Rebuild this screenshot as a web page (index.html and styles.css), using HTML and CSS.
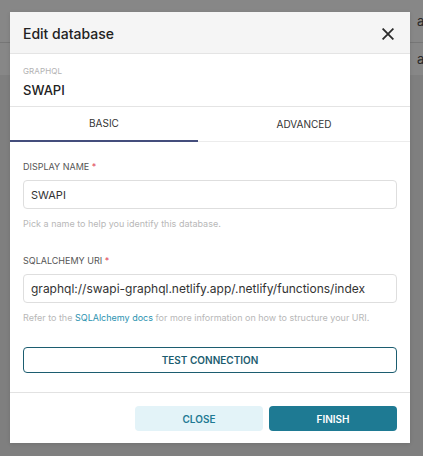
FILE: index.html
```html
<!DOCTYPE html>
<html lang="en">
<head>
<meta charset="utf-8">
<title>Edit database</title>
<link rel="stylesheet" href="styles.css">
</head>
<body>
<div class="backdrop">
  <div class="bg-row bg-row-1"><span class="bg-text">a</span></div>
  <div class="bg-row bg-row-2"><span class="bg-text">a</span></div>
</div>

<div class="modal">
  <div class="modal-header">
    <h4 class="modal-title">Edit database</h4>
    <svg class="close-icon" width="12" height="12" viewBox="0 0 12 12" aria-label="Close">
      <path d="M1.2 1.2 L10.8 10.8 M10.8 1.2 L1.2 10.8" stroke="#2b2b2b" stroke-width="1.8" stroke-linecap="square" fill="none"/>
    </svg>
  </div>

  <div class="db-info">
    <div class="db-engine">GRAPHQL</div>
    <div class="db-name">SWAPI</div>
  </div>

  <div class="tabs">
    <div class="tab tab-basic active">BASIC</div>
    <div class="tab tab-advanced">ADVANCED</div>
  </div>

  <div class="modal-body">
    <div class="field">
      <label class="field-label">DISPLAY NAME <span class="req">*</span></label>
      <div class="input">SWAPI</div>
      <div class="helper">Pick a name to help you identify this database.</div>
    </div>
    <div class="field field-uri">
      <label class="field-label">SQLALCHEMY URI <span class="req">*</span></label>
      <div class="input input-uri">graphql://swapi-graphql.netlify.app/.netlify/functions/index</div>
      <div class="helper">Refer to the <a class="link" href="#">SQLAlchemy docs</a> for more information on how to structure your URI.</div>
    </div>
    <button class="btn-outline">TEST CONNECTION</button>
  </div>

  <div class="modal-footer">
    <button class="btn btn-secondary">CLOSE</button>
    <button class="btn btn-primary">FINISH</button>
  </div>
</div>
</body>
</html>
```

FILE: styles.css
```css
* { box-sizing: border-box; }

html, body {
  margin: 0;
  padding: 0;
}

body {
  width: 423px;
  height: 456px;
  overflow: hidden;
  background: #7f7f7f;
  font-family: Inter, "Noto Sans", "Liberation Sans", sans-serif;
  color: #333;
  position: relative;
}

.backdrop {
  display: flex;
  flex-direction: column;
}

.bg-row {
  display: flex;
  align-items: center;
  padding-left: 417px;
  background: #878787;
}

.bg-row-1 {
  height: 43px;
  border-bottom: 1px solid #767676;
}

.bg-row-2 {
  height: 32px;
}

.bg-text {
  font-size: 13px;
  color: #2a2a2a;
}

.modal {
  position: absolute;
  left: 10px;
  top: 12px;
  width: 400px;
  background: #fff;
  box-shadow: 0 1px 4px rgba(0, 0, 0, 0.12);
  display: flex;
  flex-direction: column;
}

.modal-header {
  height: 42px;
  background: #f5f5f5;
  border-bottom: 1px solid #e4e4e4;
  display: flex;
  align-items: center;
  justify-content: space-between;
  padding: 0 16px 0 13px;
}

.modal-title {
  margin: 0;
  font-size: 14px;
  font-weight: 500;
  color: #222;
  padding-top: 1px;
}

.close-icon {
  display: block;
  margin-top: 2px;
}

.db-info {
  padding: 11px 13px 7px;
  border-bottom: 1px solid #e4e4e4;
}

.db-engine {
  font-size: 8px;
  line-height: 12px;
  color: #b2b2b2;
  letter-spacing: 0.1px;
}

.db-name {
  margin-top: 4px;
  font-size: 13px;
  line-height: 18px;
  font-weight: 500;
  color: #222;
}

.tabs {
  display: flex;
  height: 35px;
  border-bottom: 1px solid #ececec;
}

.tab {
  display: flex;
  align-items: center;
  justify-content: center;
  font-size: 10px;
  color: #333;
  padding-bottom: 1px;
}

.tab-basic {
  width: 188px;
}

.tab-advanced {
  flex: 1;
}

.tab.active {
  border-bottom: 2px solid #444e7c;
  margin-bottom: -1px;
}

.modal-body {
  padding: 18px 13px 19px;
  border-bottom: 1px solid #e2e2e2;
  display: flex;
  flex-direction: column;
}

.field {
  display: flex;
  flex-direction: column;
}

.field-uri {
  margin-top: 23px;
}

.field-label {
  font-size: 9px;
  line-height: 14px;
  color: #555;
  margin-bottom: 6px;
}

.req {
  color: #e04355;
}

.input {
  height: 29px;
  border: 1px solid #dedede;
  border-radius: 4px;
  padding: 0 7px;
  display: flex;
  align-items: center;
  font-size: 11px;
  color: #333;
}

.input-uri {
  font-size: 12px;
}

.helper {
  margin-top: 8px;
  font-size: 9px;
  line-height: 14px;
  color: #b8b8b8;
}

.link {
  color: #2b93b0;
  text-decoration: none;
}

.btn-outline {
  margin-top: 22px;
  height: 26px;
  border: 1px solid #1c5d70;
  border-radius: 4px;
  background: #fff;
  color: #1c5d70;
  font-family: inherit;
  font-size: 10px;
  font-weight: 600;
  padding: 0;
}

.modal-footer {
  display: flex;
  justify-content: flex-end;
  gap: 6px;
  padding: 13px 13px 12px;
}

.btn {
  width: 128px;
  height: 25px;
  border: none;
  border-radius: 4px;
  font-family: inherit;
  font-size: 10px;
  font-weight: 600;
  padding: 0;
}

.btn-secondary {
  background: #e3f3f8;
  color: #1f7a94;
}

.btn-primary {
  background: #1e7a93;
  color: #fff;
}
```
